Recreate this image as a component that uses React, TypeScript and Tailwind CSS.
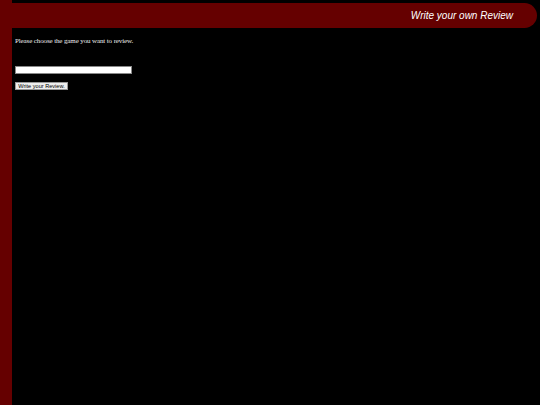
import React from 'react';

export default function App() {
  return (
    <div className="flex h-[405px] w-full bg-black overflow-hidden">
      {/* Left rail */}
      <div className="w-[12px] shrink-0 bg-[#650000]"></div>
      <div className="flex-1 flex flex-col">
        {/* Header bar */}
        <div className="mt-[3px] mr-[3px] h-[25px] bg-[#650000] rounded-r-[13px] flex items-center justify-end pr-[24px]">
          <span className="text-[10px] italic text-white" style={{ fontFamily: '"Liberation Sans", Arial, sans-serif' }}>
            Write your own Review
          </span>
        </div>
        {/* Content */}
        <div className="pl-[3px] pt-[8px]" style={{ fontFamily: '"Liberation Serif", "Times New Roman", serif' }}>
          <p className="text-[7px] leading-[10px] tracking-[-0.12px] text-[#eeeeee]">Please choose the game you want to review.</p>
          <input
            type="text"
            className="block mt-[20px] w-[117px] h-[8px] bg-white border border-[#888] outline-none"
          />
          <button
            className="mt-[8px] block h-[8px] w-[53px] bg-[#eeeeee] border border-[#999] text-[5.6px] leading-[6px] text-black whitespace-nowrap"
            style={{ fontFamily: '"Liberation Sans", Arial, sans-serif' }}
          >
            Write your Review.
          </button>
        </div>
      </div>
    </div>
  );
}
